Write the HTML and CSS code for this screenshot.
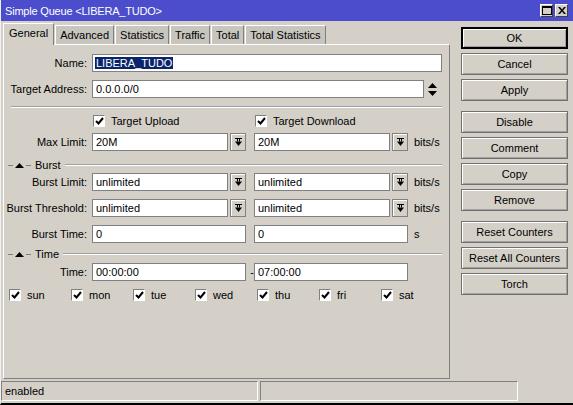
FILE: index.html
```html
<!DOCTYPE html>
<html lang="en">

<head>
  <meta charset="UTF-8">
  <title>Simple Queue &lt;LIBERA_TUDO&gt;</title>
  <link rel="stylesheet" href="styles.css">
</head>

<body>
  <div class="window">
    <div class="titlebar">
      <span class="title">Simple Queue &lt;LIBERA_TUDO&gt;</span>
      <div class="title-buttons">
        <span class="tbtn">
          <svg width="10" height="9" viewBox="0 0 10 9"><rect x="0.5" y="0.5" width="9" height="8" fill="none" stroke="#000"/><rect x="0" y="0" width="10" height="2" fill="#000"/></svg>
        </span>
        <span class="tbtn">
          <svg width="8" height="7" viewBox="0 0 8 7"><path d="M0 0h2l2 2.5 2-2.5h2l-3 3.5 3 3.5h-2l-2-2.5-2 2.5h-2l3-3.5z" fill="#000"/></svg>
        </span>
      </div>
    </div>

    <div class="main">
      <div class="left">
        <div class="tabs">
          <div class="tab active">General</div>
          <div class="tab">Advanced</div>
          <div class="tab">Statistics</div>
          <div class="tab">Traffic</div>
          <div class="tab">Total</div>
          <div class="tab">Total Statistics</div>
        </div>

        <div class="panel">
          <div class="row">
            <label class="lbl">Name:</label>
            <div class="field name-field"><span class="selected">LIBERA_TUDO</span></div>
          </div>

          <div class="row">
            <label class="lbl">Target Address:</label>
            <div class="field addr-field">0.0.0.0/0</div>
            <svg class="updown" width="9" height="13" viewBox="0 0 9 13"><path d="M4.5 0L9 5H0z M0 8h9L4.5 13z" fill="#000"/></svg>
          </div>

          <div class="sep"></div>

          <div class="row check-row">
            <div class="check-cell">
              <span class="chk"><svg width="9" height="9" viewBox="0 0 9 9"><path d="M1 4l2.5 2.5L8 1" fill="none" stroke="#000" stroke-width="2"/></svg></span>
              <span>Target Upload</span>
            </div>
            <div class="check-cell">
              <span class="chk"><svg width="9" height="9" viewBox="0 0 9 9"><path d="M1 4l2.5 2.5L8 1" fill="none" stroke="#000" stroke-width="2"/></svg></span>
              <span>Target Download</span>
            </div>
          </div>

          <div class="row">
            <label class="lbl">Max Limit:</label>
            <div class="combo">
              <div class="field">20M</div>
              <span class="drop"><svg width="7" height="8" viewBox="0 0 7 8"><path d="M0 0.5h7 M2.5 1v2.5 M4.5 1v2.5" stroke="#000" fill="none"/><path d="M0 3.5h7L3.5 8z" fill="#000"/></svg></span>
            </div>
            <div class="combo">
              <div class="field">20M</div>
              <span class="drop"><svg width="7" height="8" viewBox="0 0 7 8"><path d="M0 0.5h7 M2.5 1v2.5 M4.5 1v2.5" stroke="#000" fill="none"/><path d="M0 3.5h7L3.5 8z" fill="#000"/></svg></span>
            </div>
            <span class="unit">bits/s</span>
          </div>

          <div class="group burst">
            <span class="g-dash"></span>
            <svg class="g-arrow" width="9" height="5" viewBox="0 0 9 5"><path d="M4.5 0L9 5H0z" fill="#000"/></svg>
            <span class="g-dash"></span>
            <span class="g-title">Burst</span>
            <span class="g-line"></span>
          </div>

          <div class="row">
            <label class="lbl">Burst Limit:</label>
            <div class="combo">
              <div class="field">unlimited</div>
              <span class="drop"><svg width="7" height="8" viewBox="0 0 7 8"><path d="M0 0.5h7 M2.5 1v2.5 M4.5 1v2.5" stroke="#000" fill="none"/><path d="M0 3.5h7L3.5 8z" fill="#000"/></svg></span>
            </div>
            <div class="combo">
              <div class="field">unlimited</div>
              <span class="drop"><svg width="7" height="8" viewBox="0 0 7 8"><path d="M0 0.5h7 M2.5 1v2.5 M4.5 1v2.5" stroke="#000" fill="none"/><path d="M0 3.5h7L3.5 8z" fill="#000"/></svg></span>
            </div>
            <span class="unit">bits/s</span>
          </div>

          <div class="row">
            <label class="lbl">Burst Threshold:</label>
            <div class="combo">
              <div class="field">unlimited</div>
              <span class="drop"><svg width="7" height="8" viewBox="0 0 7 8"><path d="M0 0.5h7 M2.5 1v2.5 M4.5 1v2.5" stroke="#000" fill="none"/><path d="M0 3.5h7L3.5 8z" fill="#000"/></svg></span>
            </div>
            <div class="combo">
              <div class="field">unlimited</div>
              <span class="drop"><svg width="7" height="8" viewBox="0 0 7 8"><path d="M0 0.5h7 M2.5 1v2.5 M4.5 1v2.5" stroke="#000" fill="none"/><path d="M0 3.5h7L3.5 8z" fill="#000"/></svg></span>
            </div>
            <span class="unit">bits/s</span>
          </div>

          <div class="row">
            <label class="lbl">Burst Time:</label>
            <div class="field wide">0</div>
            <div class="field wide">0</div>
            <span class="unit">s</span>
          </div>

          <div class="group time">
            <span class="g-dash"></span>
            <svg class="g-arrow" width="9" height="5" viewBox="0 0 9 5"><path d="M4.5 0L9 5H0z" fill="#000"/></svg>
            <span class="g-dash"></span>
            <span class="g-title">Time</span>
            <span class="g-line"></span>
          </div>

          <div class="row">
            <label class="lbl">Time:</label>
            <div class="field wide">00:00:00</div>
            <span class="dash">-</span>
            <div class="field wide">07:00:00</div>
          </div>

          <div class="days">
            <div class="day"><span class="chk"><svg width="9" height="9" viewBox="0 0 9 9"><path d="M1 4l2.5 2.5L8 1" fill="none" stroke="#000" stroke-width="2"/></svg></span>sun</div>
            <div class="day"><span class="chk"><svg width="9" height="9" viewBox="0 0 9 9"><path d="M1 4l2.5 2.5L8 1" fill="none" stroke="#000" stroke-width="2"/></svg></span>mon</div>
            <div class="day"><span class="chk"><svg width="9" height="9" viewBox="0 0 9 9"><path d="M1 4l2.5 2.5L8 1" fill="none" stroke="#000" stroke-width="2"/></svg></span>tue</div>
            <div class="day"><span class="chk"><svg width="9" height="9" viewBox="0 0 9 9"><path d="M1 4l2.5 2.5L8 1" fill="none" stroke="#000" stroke-width="2"/></svg></span>wed</div>
            <div class="day"><span class="chk"><svg width="9" height="9" viewBox="0 0 9 9"><path d="M1 4l2.5 2.5L8 1" fill="none" stroke="#000" stroke-width="2"/></svg></span>thu</div>
            <div class="day"><span class="chk"><svg width="9" height="9" viewBox="0 0 9 9"><path d="M1 4l2.5 2.5L8 1" fill="none" stroke="#000" stroke-width="2"/></svg></span>fri</div>
            <div class="day"><span class="chk"><svg width="9" height="9" viewBox="0 0 9 9"><path d="M1 4l2.5 2.5L8 1" fill="none" stroke="#000" stroke-width="2"/></svg></span>sat</div>
          </div>
        </div>
      </div>

      <div class="actions">
        <div class="btn default">OK</div>
        <div class="btn">Cancel</div>
        <div class="btn">Apply</div>
        <div class="btn spaced">Disable</div>
        <div class="btn">Comment</div>
        <div class="btn">Copy</div>
        <div class="btn">Remove</div>
        <div class="btn spaced">Reset Counters</div>
        <div class="btn">Reset All Counters</div>
        <div class="btn">Torch</div>
      </div>
    </div>

    <div class="statusbar">
      <div class="status-cell first">enabled</div>
      <div class="status-cell second"></div>
    </div>
  </div>
</body>

</html>
```

FILE: styles.css
```css
* {
  margin: 0;
  padding: 0;
  box-sizing: border-box;
}

body {
  font-family: 'Liberation Sans', Arial, sans-serif;
  font-size: 11px;
  color: #000;
  background: #d4d0c8;
}

.window {
  width: 573px;
  height: 405px;
  background: #d4d0c8;
  border-left: 1px solid #f0f0f0;
  border-bottom: 2px solid #000;
  overflow: hidden;
}

/* title bar */
.titlebar {
  height: 21px;
  background: #4b4dcc;
  display: flex;
  align-items: center;
  justify-content: space-between;
  padding: 0 5px 0 4px;
}

.title {
  color: #fff;
  font-size: 11px;
  letter-spacing: -0.2px;
}

.title-buttons {
  display: flex;
  gap: 2px;
}

.tbtn {
  width: 13px;
  height: 13px;
  background: #d4d0c8;
  border: 1px solid #404040;
  border-top-color: #fff;
  border-left-color: #fff;
  display: flex;
  align-items: center;
  justify-content: center;
}

/* main area */
.main {
  display: flex;
  height: 359px;
}

.left {
  margin-left: 2px;
  width: 447px;
}

.tabs {
  display: flex;
  align-items: flex-end;
  height: 23px;
  padding-top: 2px;
}

.tab {
  height: 19px;
  padding: 0 4px;
  line-height: 18px;
  background: #c8c5bf;
  border: 1px solid #808080;
  border-bottom: none;
  border-top-color: #fff;
  border-left-color: #fff;
  margin-right: 1px;
  white-space: nowrap;
}

.tab.active {
  height: 22px;
  padding: 0 5px;
  background: #d4d0c8;
  line-height: 19px;
  position: relative;
  margin-bottom: -1px;
  z-index: 1;
}

.panel {
  height: 335px;
  border: 1px solid #808080;
  border-top-color: #fff;
  border-left-color: #fff;
  padding-top: 9px;
}

.row {
  display: flex;
  align-items: center;
  height: 18px;
  margin-bottom: 8px;
  white-space: nowrap;
}

.lbl {
  width: 83px;
  text-align: right;
  margin-right: 5px;
}

.field {
  height: 18px;
  background: #fff;
  border: 1px solid #808080;
  padding: 0 3px;
  line-height: 16px;
  white-space: nowrap;
}

.name-field {
  width: 350px;
  padding-left: 2px;
}

.selected {
  background: #0a246a;
  color: #fff;
  padding: 0 1px;
}

.addr-field {
  width: 332px;
}

.updown {
  margin-left: 4px;
}

.sep {
  margin: 1px 7px 7px 7px;
  border-top: 1px solid #a0a0a0;
  border-bottom: 1px solid #fff;
}

.check-row {
  padding-left: 89px;
  height: 12px;
  margin-bottom: 6px;
}

.check-cell {
  display: flex;
  align-items: center;
  width: 162px;
}

.chk {
  width: 12px;
  height: 12px;
  background: #fff;
  border: 1px solid #808080;
  border-right-color: #fff;
  border-bottom-color: #fff;
  display: inline-flex;
  align-items: center;
  justify-content: center;
  margin-right: 6px;
}

.combo {
  display: flex;
  width: 154px;
  margin-right: 8px;
}

.combo .field {
  flex: 1;
}

.drop {
  width: 16px;
  height: 18px;
  margin-left: 2px;
  border: 1px solid #808080;
  box-shadow: inset 1px 1px #fff;
  display: flex;
  align-items: center;
  justify-content: center;
}

.field.wide {
  width: 154px;
  margin-right: 8px;
}

.unit {
  margin-left: -2px;
}

.dash {
  width: 8px;
  margin-left: -6px;
  margin-right: -2px;
  text-align: center;
}

/* collapsible group header */
.group {
  display: flex;
  align-items: center;
  height: 12px;
  margin: 0 7px 2px 4px;
}

.group.time {
  margin-top: -3px;
  margin-bottom: 3px;
}

.g-dash {
  width: 5px;
  border-top: 1px solid #808080;
}

.g-arrow {
  margin: 0 2px;
}

.g-title {
  margin: 0 4px 0 4px;
}

.g-line {
  flex: 1;
  border-top: 1px solid #a0a0a0;
  border-bottom: 1px solid #fff;
}

.days {
  display: flex;
  padding-left: 5px;
}

.day {
  display: flex;
  align-items: center;
  width: 62px;
}

/* right button column */
.actions {
  margin-left: 11px;
  padding-top: 6px;
  width: 107px;
  display: flex;
  flex-direction: column;
  gap: 4px;
}

.btn {
  height: 22px;
  border: 1px solid #707070;
  box-shadow: inset 1px 1px #fff, inset -1px -1px #a0a0a0;
  text-align: center;
  line-height: 20px;
  white-space: nowrap;
}

.btn.default {
  border: 2px solid #000;
  line-height: 18px;
}

.btn.spaced {
  margin-top: 6px;
}

/* status bar */
.statusbar {
  display: flex;
  gap: 2px;
  padding-top: 1px;
}

.status-cell {
  height: 20px;
  border: 1px solid #808080;
  border-right-color: #fff;
  border-bottom-color: #fff;
  padding-left: 3px;
  line-height: 18px;
}

.status-cell.first {
  width: 257px;
}

.status-cell.second {
  width: 258px;
}
```
